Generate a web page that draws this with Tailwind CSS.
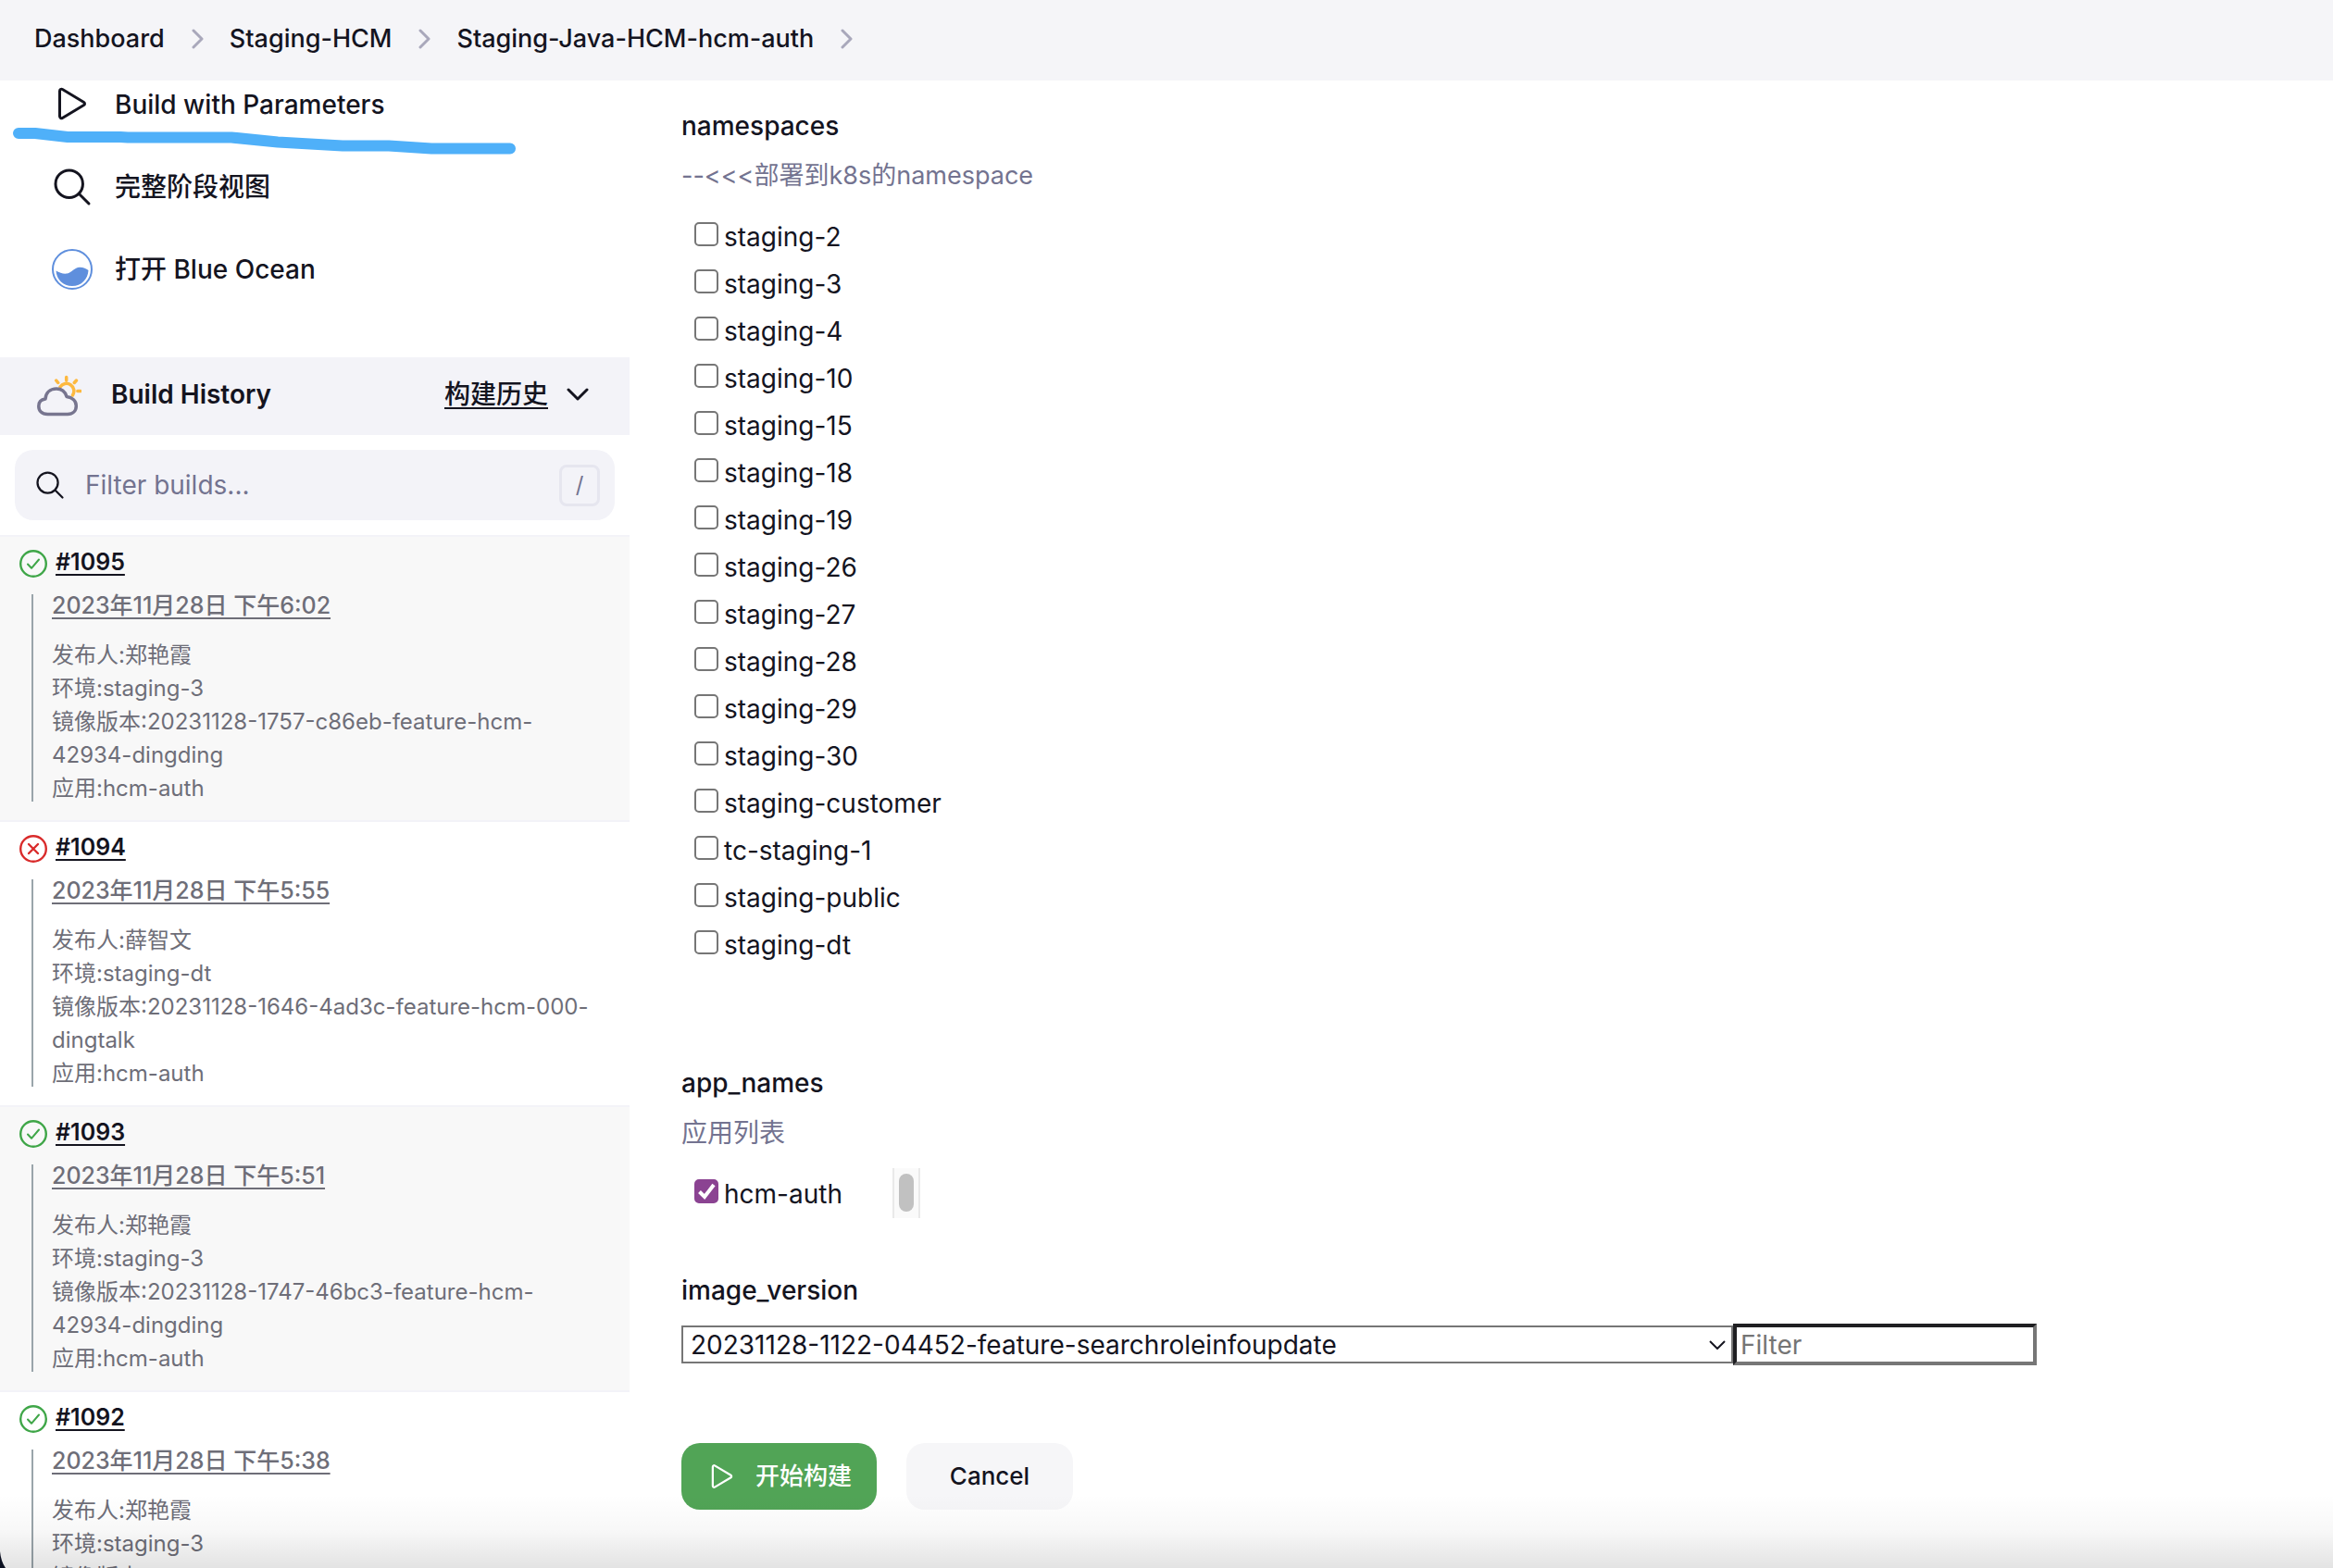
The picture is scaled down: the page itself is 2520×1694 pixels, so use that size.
<!DOCTYPE html>
<html lang="zh-CN">
<head>
<meta charset="utf-8">
<meta name="viewport" content="width=device-width, initial-scale=1">
<title>Staging-Java-HCM-hcm-auth</title>
<script src="https://cdn.jsdelivr.net/npm/@tailwindcss/browser@4"></script>
</head>
<body class="relative flex h-screen flex-col overflow-hidden bg-white font-[Inter,'Noto_Sans_CJK_SC',sans-serif] text-[28px] leading-9 text-[#14141f]">

<svg class="hidden" aria-hidden="true">
  <symbol id="play" viewBox="0 0 512 512"><path d="M112 111v290c0 17.440 17 28.520 31 20.160l247.900-148.370c12.120-7.250 12.120-26.330 0-33.580L143 90.840c-14-8.360-31 2.720-31 20.160z" fill="none" stroke="currentColor" stroke-width="32" stroke-miterlimit="10"/></symbol>
  <symbol id="search" viewBox="0 0 512 512"><path d="M221.090 64a157.090 157.090 0 1 0 157.090 157.090A157.100 157.100 0 0 0 221.090 64zM338.290 338.290L448 448" fill="none" stroke="currentColor" stroke-width="32" stroke-linecap="round"/></symbol>
  <symbol id="crumb" viewBox="0 0 14 22"><path d="M3 2l9 9-9 9" fill="none" stroke="currentColor" stroke-width="3" stroke-linecap="round" stroke-linejoin="round"/></symbol>
  <symbol id="ok" viewBox="0 0 30 30"><circle cx="15" cy="15" r="13.800" fill="none" stroke="currentColor" stroke-width="2.400"/><path d="M9 15.500l4 4.300 8-9.300" fill="none" stroke="currentColor" stroke-width="2" stroke-linecap="round" stroke-linejoin="round"/></symbol>
  <symbol id="fail" viewBox="0 0 30 30"><circle cx="15" cy="15" r="13.800" fill="none" stroke="currentColor" stroke-width="2.400"/><path d="M10 10l10 10M20 10l-10 10" fill="none" stroke="currentColor" stroke-width="2.400" stroke-linecap="round"/></symbol>
</svg>

<header class="h-[87px] shrink-0 bg-[#f5f5f8]">
  <nav aria-label="Breadcrumb" class="flex h-[84px] items-center gap-7 pl-[37px] text-[27px] font-medium">
    <a href="#">Dashboard</a>
    <svg class="h-[22px] w-3.5 text-[#a9a8bb]"><use href="#crumb"/></svg>
    <a href="#">Staging-HCM</a>
    <svg class="h-[22px] w-3.5 text-[#a9a8bb]"><use href="#crumb"/></svg>
    <a href="#">Staging-Java-HCM-hcm-auth</a>
    <svg class="h-[22px] w-3.5 text-[#a9a8bb]"><use href="#crumb"/></svg>
  </nav>
</header>

<div class="grid min-h-0 flex-1 grid-cols-[680px_1fr] overflow-hidden">
  <aside class="min-h-0 overflow-hidden">
    <nav aria-label="Tasks" class="flex flex-col pb-[51px] pl-[54px] font-medium">
      <a href="#" class="flex h-[70px] items-start gap-[22px] pt-px"><svg class="size-12"><use href="#play"/></svg><span class="pt-[7px]">Build with Parameters</span></a>
      <a href="#" class="flex h-[89px] items-center gap-[22px]"><svg class="size-12"><use href="#search"/></svg><span>完整阶段视图</span></a>
      <a href="#" class="flex h-[89px] items-center gap-[22px]">
        <svg class="size-12" viewBox="0 0 48 48"><circle cx="24" cy="24" r="21" fill="none" stroke="#5f8fdd" stroke-width="2"/><path d="M6.500 25.500c4 2.500 8 3.500 12 3 5-1 8-6.500 13.500-6.700 4-.1 7 1.500 9.500 3.200C41 34.500 34 42 24 42S7 34.500 6.500 25.500z" fill="#5f8fdd"/></svg>
        <span>打开 Blue Ocean</span></a>
    </nav>

    <section aria-label="Build History">
      <div class="flex h-[84px] items-center bg-[#f3f3f8] pb-1 pl-10 pr-11">
        <svg class="size-12" viewBox="0 0 48 48" fill="none" stroke-width="3.500" stroke-linecap="round" stroke-linejoin="round">
          <path d="M25 16a8 8 0 1 1 13.500 9M31.700 5.500v3.500M20.700 9l2 2.500M42.500 9l-2.200 2.500M43.800 20.500h3" stroke="#fdb940"/>
          <path d="M11.500 45.500C5 45.500 1.800 42 1.800 36.800 1.800 32 5 29.500 9 29 9.500 22.500 14 18 21 18c5.500 0 9.500 3.500 11 8.500 6 1 10.300 4.500 10.300 10 0 5.500-3.800 9-9.300 9z" stroke="#77758f"/>
        </svg>
        <h2 class="ml-8 flex-1 font-semibold">Build History</h2>
        <a href="#" class="flex items-center gap-5 font-medium"><span class="underline decoration-2 underline-offset-4">构建历史</span>
          <svg class="h-3.5 w-6" viewBox="0 0 24 14"><path d="M2 2l10 10L22 2" fill="none" stroke="currentColor" stroke-width="3" stroke-linecap="round" stroke-linejoin="round"/></svg></a>
      </div>

      <label class="mx-4 my-4 flex h-[76px] items-center rounded-[20px] bg-[#f3f3f8] pl-5 pr-4">
        <svg class="size-9 shrink-0"><use href="#search"/></svg>
        <input type="search" aria-label="Filter builds" placeholder="Filter builds..." class="ml-5 min-w-0 flex-1 bg-transparent outline-none placeholder:text-[#737390]">
        <kbd class="flex h-[45px] w-11 items-center justify-center rounded-lg border-[3px] border-[#e6e6ef] font-[Inter] text-2xl text-[#737390]">/</kbd>
      </label>

      <ol id="builds" class="border-t-2 border-[#f3f3f8] text-2xl leading-9 text-[#6e6e78]"></ol>
    </section>
  </aside>

  <main class="min-w-0 pl-14 pt-[31px]">
    <form class="flex flex-col items-start">
      <h3 class="font-medium">namespaces</h3>
      <p class="mt-[18px] text-[27px] text-[#737390]">--&lt;&lt;&lt;部署到k8s的namespace</p>
      <ul id="namespaces" class="mt-5 pl-3.5 pt-0.5"></ul>

      <h3 class="mt-[106px] font-medium">app_names</h3>
      <p class="mt-[18px] text-[#737390]">应用列表</p>
      <div class="mt-5 flex h-[54px] w-[258px] justify-between pl-3.5">
        <label class="flex gap-1.5 pt-0.5 leading-[52px]">
          <span class="mt-2.5 grid size-[26px]">
            <input type="checkbox" checked class="col-start-1 row-start-1 size-[26px] appearance-none rounded-[5px] border-2 border-[#767676] checked:border-[#8b4392] checked:bg-[#8b4392]">
            <svg class="pointer-events-none col-start-1 row-start-1 size-[26px]" viewBox="0 0 26 26"><path d="M5.500 13.500l5.500 5.500 10-13" fill="none" stroke="#fff" stroke-width="4"/></svg>
          </span>hcm-auth</label>
        <div class="flex w-[30px] justify-center border-x-2 border-[#e9e9e9] bg-[#fafafa] pt-1.5"><div class="h-[41px] w-4 rounded-full bg-[#c1c1c1]"></div></div>
      </div>

      <h3 class="mt-[60px] font-medium">image_version</h3>
      <div class="mt-[18px] flex max-w-full items-center">
        <div class="relative">
          <select aria-label="image_version" class="block h-[41px] w-[1136px] appearance-none border-2 border-[#767676] bg-white pl-2 leading-9"><option>20231128-1122-04452-feature-searchroleinfoupdate</option></select>
          <svg class="pointer-events-none absolute right-2 top-4 h-2.5 w-[18px]" viewBox="0 0 18 10"><path d="M1 1l8 8 8-8" fill="none" stroke="currentColor" stroke-width="2"/></svg>
        </div>
        <input type="text" aria-label="Filter" placeholder="Filter" class="h-[45px] w-[328px] border-4 border-b-[#767676] border-l-[#1f1f22] border-r-[#767676] border-t-[#1f1f22] bg-white pl-1 placeholder:text-[#757575]">
      </div>

      <div class="mt-[84px] flex gap-8 text-[26px] font-medium">
        <button type="submit" class="flex h-[72px] items-center gap-[18px] rounded-[20px] bg-[#51a456] pl-[26px] pr-[27px] text-white"><svg class="size-9"><use href="#play"/></svg>开始构建</button>
        <button type="button" class="h-[72px] w-[180px] rounded-[20px] bg-[#f6f6f8]">Cancel</button>
      </div>
    </form>
  </main>
</div>

<!-- Pen stroke under the active task -->
<svg class="pointer-events-none absolute left-0 top-[130px] h-10 w-[570px]" viewBox="0 0 570 40"><path d="M20 14h18l35 4h57l8 .500h112l50 5 70 4h50l46 3h85" fill="none" stroke="#4fb0f9" stroke-width="12" stroke-linecap="round" stroke-linejoin="round"/></svg>
<!-- Window edge: shade and rounded corner -->
<div class="pointer-events-none absolute inset-x-0 bottom-0 h-20 bg-linear-to-b from-black/0 via-black/3 to-black/11"></div>
<svg class="absolute bottom-0 left-0 h-[18px] w-1.5" viewBox="0 0 6 18"><path d="M0 0q1 11 6 18H0z" fill="#0b1020"/></svg>

<script>
  const namespaces = ['staging-2','staging-3','staging-4','staging-10','staging-15','staging-18','staging-19','staging-26','staging-27','staging-28','staging-29','staging-30','staging-customer','tc-staging-1','staging-public','staging-dt'];
  document.getElementById('namespaces').innerHTML = namespaces.map(n => `
    <li><label class="flex h-[51px] gap-1.5 leading-[52px]"><input type="checkbox" name="namespaces" value="${n}" class="mt-2.5 size-[26px] appearance-none rounded-[5px] border-2 border-[#767676]">${n}</label></li>`).join('');

  const builds = [
    [1095, 'ok', '6:02', '郑艳霞', 'staging-3', '20231128-1757-c86eb-feature-hcm-42934-dingding'],
    [1094, 'fail', '5:55', '薛智文', 'staging-dt', '20231128-1646-4ad3c-feature-hcm-000-dingtalk'],
    [1093, 'ok', '5:51', '郑艳霞', 'staging-3', '20231128-1747-46bc3-feature-hcm-42934-dingding'],
    [1092, 'ok', '5:38', '郑艳霞', 'staging-3', ''],
  ];
  document.getElementById('builds').innerHTML = builds.map(([id, state, time, who, env, image]) => `
    <li class="h-[308px] border-b-2 border-[#f3f3f8] pt-[9px] odd:bg-[#f8f8f8]">
      <div class="flex h-9 items-center gap-[9px] pl-[21px]">
        <svg class="mt-1 size-[30px] ${state === 'ok' ? 'text-[#3fa648]' : 'text-[#d92b2b]'}"><use href="#${state}"/></svg>
        <a href="#" class="text-[25px] font-semibold text-[#14141f] underline decoration-2 underline-offset-4">#${id}</a>
      </div>
      <div class="ml-[34px] mt-[17px] h-[224px] border-l-2 border-[#9aa5ab] pl-5 pr-6">
        <a href="#" class="block pb-6 text-[25px] leading-6 font-medium underline decoration-2 underline-offset-4">2023年11月28日 下午${time}</a>
        <p>发布人:${who}<br>环境:${env}<br>镜像版本:${image}<br>应用:hcm-auth</p>
      </div>
    </li>`).join('');
</script>
</body>
</html>
